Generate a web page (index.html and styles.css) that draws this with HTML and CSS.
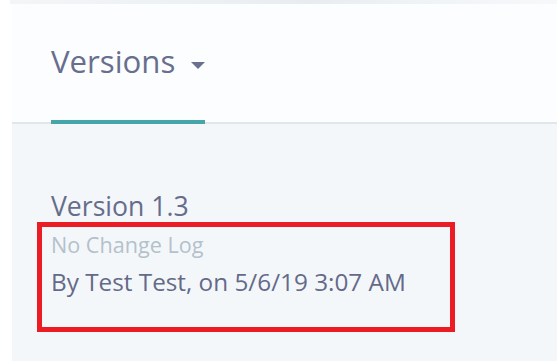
FILE: index.html
```html
<!DOCTYPE html>
<html lang="en">
<head>
<meta charset="utf-8">
<title>Versions</title>
<link rel="stylesheet" href="styles.css">
</head>
<body>
<div class="top-strip"></div>
<div class="panel">
  <div class="header">
    <div class="tab">
      <span class="tab-label">Versions</span>
      <svg class="caret" width="14" height="7" viewBox="0 0 14 7" aria-hidden="true"><path d="M0 0H14L7 7Z" fill="#6a7090"/></svg>
    </div>
  </div>
  <div class="content">
    <h2 class="version-title">Version 1.3</h2>
    <div class="highlight">
      <div class="changelog">No Change Log</div>
      <div class="byline">By Test Test, on 5/6/19 3:07 AM</div>
    </div>
  </div>
</div>
</body>
</html>
```
FILE: styles.css
```css
html, body {
  margin: 0;
  padding: 0;
}
body {
  background: #ffffff;
  font-family: "Open Sans", "Noto Sans", sans-serif;
  color: #676d8c;
  display: flex;
  flex-direction: column;
  min-height: 100vh;
}
.top-strip {
  height: 4px;
  margin-left: 10px;
  background: linear-gradient(90deg, #f3f5f7 0%, #eef1f4 30%, #e8ecf0 55%, #f0f3f6 75%, #f6f8fa 100%);
}
.panel {
  flex: 1;
  margin-left: 12px;
  display: flex;
  flex-direction: column;
  background: #f4f7fa;
}
.header {
  display: flex;
  align-items: flex-end;
  height: 118px;
  padding-left: 39px;
  background: #fcfdfe;
  border-bottom: 2px solid #e2e6ea;
}
.tab {
  display: flex;
  align-items: flex-start;
  width: 154px;
  box-sizing: border-box;
  padding-top: 37px;
  padding-bottom: 39px;
  margin-bottom: -2px;
  border-bottom: 4px solid #45a6a9;
}
.tab-label {
  font-size: 31.2px;
  line-height: 40px;
  color: #686e8e;
}
.caret {
  margin-left: auto;
  margin-top: 21px;
  display: block;
}
.content {
  flex: 1;
  padding: 67px 0 0 25px;
}
.version-title {
  margin: 0;
  padding-left: 14px;
  font-size: 26.6px;
  line-height: 31px;
  font-weight: 400;
  color: #666c8b;
}
.highlight {
  box-sizing: border-box;
  width: 418px;
  border: 5px solid #ec1c24;
  padding: 4px 0 29px 9px;
}
.changelog {
  font-size: 21.6px;
  line-height: 28px;
  color: #b3c1cb;
}
.byline {
  margin-top: 7px;
  font-size: 24.3px;
  line-height: 32px;
  color: #646a89;
}
```
